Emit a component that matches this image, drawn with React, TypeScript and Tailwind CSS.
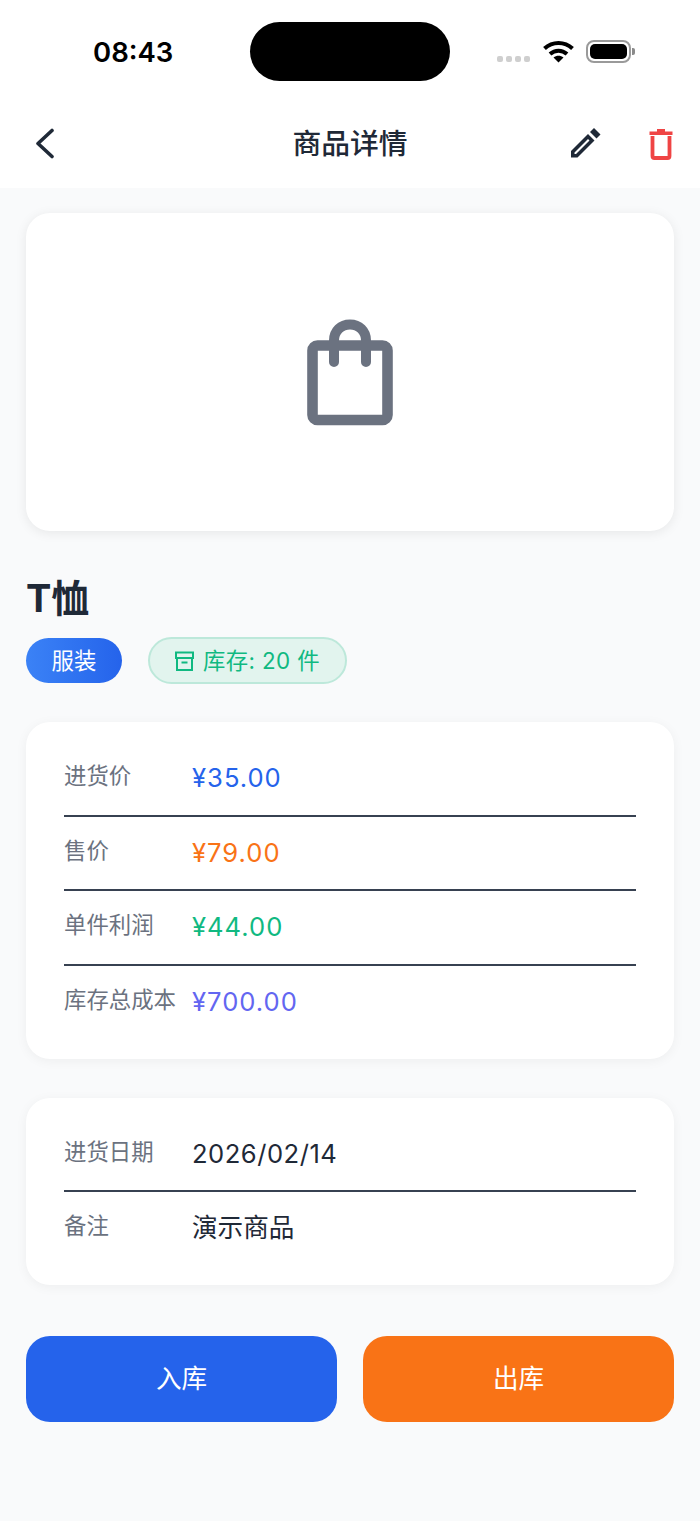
import React from "react";

const font = "font-['Inter','Noto_Sans_CJK_SC',sans-serif]";

type Row = { label: string; value: string; color: string };

const priceRows: Row[] = [
  { label: "进货价", value: "¥35.00", color: "text-[#2563eb] tracking-[1px]" },
  { label: "售价", value: "¥79.00", color: "text-[#f97316] tracking-[1px]" },
  { label: "单件利润", value: "¥44.00", color: "text-[#10b981] tracking-[1px]" },
  { label: "库存总成本", value: "¥700.00", color: "text-[#6366f1] tracking-[1px]" },
];

const infoRows: Row[] = [
  { label: "进货日期", value: "2026/02/14", color: "text-[#1f2937] tracking-[0.5px]" },
  { label: "备注", value: "演示商品", color: "text-[#1f2937]" },
];

const InfoCard = ({ rows, className }: { rows: Row[]; className: string }) => (
  <div className={`mx-[26px] rounded-[24px] bg-white px-[38px] pt-[20px] pb-[18px] shadow-[0_2px_12px_rgba(0,0,0,0.05)] ${className}`}>
    {rows.map((row, i) => (
      <div
        key={row.label}
        className={`flex h-[74.67px] items-start pt-[18px] ${i < rows.length - 1 ? "border-b-2 border-[#374151]" : ""}`}
      >
        <span className="w-[128px] shrink-0 text-[22.4px] leading-[32px] text-[#6b7280] whitespace-nowrap">{row.label}</span>
        <span className={`text-[25.6px] leading-[36px] ${row.color}`}>{row.value}</span>
      </div>
    ))}
  </div>
);

export default function App() {
  return (
    <div className={`min-h-[1521px] bg-[#f9fafb] ${font}`}>
      <div className="bg-white">
        {/* status bar */}
        <div className="relative flex h-[102px] items-start">
          <span className="ml-[93px] mt-[35px] text-[27.5px] font-semibold leading-[34px] text-black">08:43</span>
          <div className="absolute left-[250px] top-[22px] h-[59px] w-[200px] rounded-[30px] bg-black" />
          <div className="absolute left-[497px] top-[56px] flex gap-[3px]">
            <span className="h-[6px] w-[6px] rounded-[2px] bg-[#cfcfcf]" />
            <span className="h-[6px] w-[6px] rounded-[2px] bg-[#cfcfcf]" />
            <span className="h-[6px] w-[6px] rounded-[2px] bg-[#cfcfcf]" />
            <span className="h-[6px] w-[6px] rounded-[2px] bg-[#cfcfcf]" />
          </div>
          <svg className="absolute left-[543px] top-[40px]" width="31" height="23" viewBox="0 0 31 23">
            <path d="M1.5 8.5C9.5 1 21.5 1 29.5 8.5" fill="none" stroke="#000" strokeWidth="4" />
            <path d="M7 14C12 9.5 19 9.5 24 14" fill="none" stroke="#000" strokeWidth="4" />
            <path d="M15.5 22.5L10.5 17.5C13.5 15 17.5 15 20.5 17.5Z" fill="#000" />
          </svg>
          <div className="absolute left-[586px] top-[40px] flex items-center">
            <div className="h-[23px] w-[45px] rounded-[8px] border-2 border-[#9a9a9a] p-[2px]">
              <div className="h-full w-full rounded-[5px] bg-black" />
            </div>
            <span className="ml-[1px] h-[7px] w-[3px] rounded-r-[2px] bg-[#8a8a8a]" />
          </div>
        </div>

        {/* header */}
        <div className="relative flex h-[86px] items-center justify-center pb-[3px]">
          <svg className="absolute left-[35px] top-[25px]" width="20" height="32" viewBox="0 0 20 32" fill="none">
            <path d="M17 3.5L3 16.5L17 29.5" stroke="#1f2937" strokeWidth="3.6" strokeLinecap="round" strokeLinejoin="round" />
          </svg>
          <h1 className="text-[28.8px] font-medium leading-[36px] text-[#1f2937]">商品详情</h1>
          <svg className="absolute left-[570px] top-[25px]" width="32" height="32" viewBox="0 0 32 32" fill="#1f2937">
            <path d="M1 24L18 7L24.5 13.5L7.5 30.5H1ZM4.5 25.5V27H6L19.5 13.5L18 12Z" fillRule="evenodd" />
            <path d="M20 5L24 1L30.5 7.5L26.5 11.5Z" />
          </svg>
          <svg className="absolute left-[649px] top-[26px]" width="24" height="32" viewBox="0 0 24 32" fill="none">
            <path d="M8 1H16V3.5H23.5V7H0.5V3.5H8Z" fill="#ef4444" />
            <path d="M3.5 8V28A2 2 0 0 0 5.5 30H18.5A2 2 0 0 0 20.5 28V8" stroke="#ef4444" strokeWidth="3.8" />
          </svg>
        </div>
      </div>

      {/* picture placeholder */}
      <div className="mx-[26px] mt-[25px] flex h-[318px] items-center justify-center rounded-[24px] bg-white shadow-[0_2px_12px_rgba(0,0,0,0.08)]">
        <svg width="88" height="108" viewBox="0 0 88 108" fill="none">
          <path d="M11.5 27.5H76.5A5 5 0 0 1 81.5 32.5V97A5 5 0 0 1 76.5 102H11.5A5 5 0 0 1 6.5 97V32.5A5 5 0 0 1 11.5 27.5Z" stroke="#6b7280" strokeWidth="10.6" strokeLinejoin="round" />
          <path d="M28 44V22.5C28 13 35 6.5 44 6.5C53 6.5 60 13 60 22.5V44" stroke="#6b7280" strokeWidth="10" strokeLinecap="round" />
        </svg>
      </div>

      {/* title */}
      <h2 className="mx-[26px] mt-[42px] text-[38px] font-bold leading-[50px] text-[#1f2937]">T恤</h2>
      <div className="mx-[26px] mt-[14px] flex items-center gap-[26px]">
        <span className="flex h-[45px] w-[96px] items-center justify-center rounded-full bg-gradient-to-r from-[#3b82f6] to-[#2563eb] text-[22.4px] text-white">
          服装
        </span>
        <span className="flex h-[47px] w-[199px] items-center justify-center gap-[9px] rounded-full border-2 border-[#bde8da] bg-[#e2f4ee] text-[22.4px] tracking-[0.4px] text-[#10b981]">
          <svg width="19" height="20" viewBox="0 0 19 20" fill="none" stroke="#10b981" strokeWidth="2">
            <path d="M1 1.5H18V7H1Z" />
            <path d="M2 7V19H17V7" />
            <path d="M6.5 11.5H12.5" />
          </svg>
          库存: 20 件
        </span>
      </div>

      <InfoCard rows={priceRows} className="mt-[38px]" />
      <InfoCard rows={infoRows} className="mt-[39px]" />

      {/* actions */}
      <div className="mx-[26px] mt-[51px] flex gap-[26px]">
        <button className="flex h-[86px] flex-1 items-center justify-center rounded-[24px] bg-[#2563eb] pt-[1px] text-[25.6px] text-white">入库</button>
        <button className="flex h-[86px] flex-1 items-center justify-center rounded-[24px] bg-[#f97316] pt-[1px] text-[25.6px] text-white">出库</button>
      </div>
    </div>
  );
}
